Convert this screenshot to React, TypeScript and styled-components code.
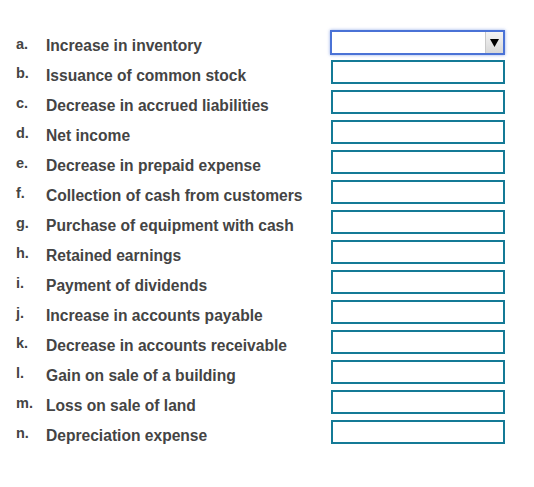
import React from "react";
import styled, { createGlobalStyle } from "styled-components";

const GlobalStyle = createGlobalStyle`
  body {
    margin: 0;
    background: #ffffff;
    font-family: "Liberation Sans", Arial, sans-serif;
  }
`;

const List = styled.div`
  padding: 30px 0 0 16px;
  display: flex;
  flex-direction: column;
  gap: 6px;
`;

const Row = styled.div`
  display: grid;
  grid-template-columns: 30px 285px 175px;
  align-items: center;
  height: 24px;
`;

const Letter = styled.span`
  font-size: 14.5px;
  font-weight: bold;
  color: #444;
  position: relative;
  top: 1px;
`;

const Label = styled.span`
  font-size: 15.6px;
  font-weight: bold;
  color: #444;
  position: relative;
  top: 3.5px;
  white-space: nowrap;
`;

const Box = styled.div<{ $focused?: boolean }>`
  box-sizing: border-box;
  height: ${({ $focused }) => ($focused ? "25px" : "24px")};
  width: ${({ $focused }) => ($focused ? "175px" : "174px")};
  margin-left: ${({ $focused }) => ($focused ? "-1px" : "0")};
  border: 2px solid ${({ $focused }) => ($focused ? "#4a72d6" : "#147a96")};
  box-shadow: ${({ $focused }) =>
    $focused ? "0 0 3px rgba(74, 114, 214, 0.6)" : "none"};
  background: #fff;
  display: flex;
  justify-content: flex-end;
  align-items: stretch;
`;

const Arrow = styled.div`
  width: 17px;
  background: linear-gradient(#f4f4f4, #d8d8d8);
  border-left: 1px solid #c9c9c9;
  display: flex;
  align-items: center;
  justify-content: center;
`;

const items = [
  ["a.", "Increase in inventory"],
  ["b.", "Issuance of common stock"],
  ["c.", "Decrease in accrued liabilities"],
  ["d.", "Net income"],
  ["e.", "Decrease in prepaid expense"],
  ["f.", "Collection of cash from customers"],
  ["g.", "Purchase of equipment with cash"],
  ["h.", "Retained earnings"],
  ["i.", "Payment of dividends"],
  ["j.", "Increase in accounts payable"],
  ["k.", "Decrease in accounts receivable"],
  ["l.", "Gain on sale of a building"],
  ["m.", "Loss on sale of land"],
  ["n.", "Depreciation expense"],
];

export default function App() {
  return (
    <>
      <GlobalStyle />
      <List>
        {items.map(([letter, text], i) => (
          <Row key={letter}>
            <Letter>{letter}</Letter>
            <Label>{text}</Label>
            {i === 0 ? (
              <Box $focused>
                <Arrow>
                  <svg width="9" height="8" viewBox="0 0 9 8">
                    <path d="M0 0 H9 L4.5 8 Z" fill="#000" />
                  </svg>
                </Arrow>
              </Box>
            ) : (
              <Box />
            )}
          </Row>
        ))}
      </List>
    </>
  );
}
